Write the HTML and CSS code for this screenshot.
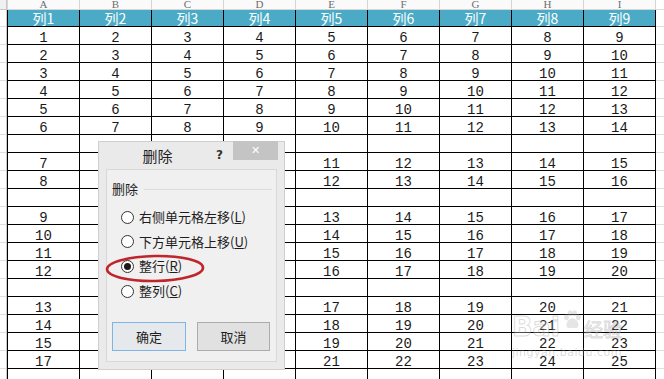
FILE: index.html
```html
<!DOCTYPE html>
<html><head><meta charset="utf-8">
<title>删除</title>
<link rel="stylesheet" href="styles.css">
</head>
<body>
<div class="sheet">
  <div class="row letters"><i class="rh"></i><b>A</b><b>B</b><b>C</b><b>D</b><b>E</b><b>F</b><b>G</b><b>H</b><b>I</b><i class="fill"></i></div>
  <div class="row head"><i class="rh"></i><span>列1</span><span>列2</span><span>列3</span><span>列4</span><span>列5</span><span>列6</span><span>列7</span><span>列8</span><span>列9</span><i class="fill"></i></div>
  <div class="row"><i class="rh"></i><span>1</span><span>2</span><span>3</span><span>4</span><span>5</span><span>6</span><span>7</span><span>8</span><span>9</span><i class="fill"></i></div>
  <div class="row"><i class="rh"></i><span>2</span><span>3</span><span>4</span><span>5</span><span>6</span><span>7</span><span>8</span><span>9</span><span>10</span><i class="fill"></i></div>
  <div class="row"><i class="rh"></i><span>3</span><span>4</span><span>5</span><span>6</span><span>7</span><span>8</span><span>9</span><span>10</span><span>11</span><i class="fill"></i></div>
  <div class="row"><i class="rh"></i><span>4</span><span>5</span><span>6</span><span>7</span><span>8</span><span>9</span><span>10</span><span>11</span><span>12</span><i class="fill"></i></div>
  <div class="row"><i class="rh"></i><span>5</span><span>6</span><span>7</span><span>8</span><span>9</span><span>10</span><span>11</span><span>12</span><span>13</span><i class="fill"></i></div>
  <div class="row"><i class="rh"></i><span>6</span><span>7</span><span>8</span><span>9</span><span>10</span><span>11</span><span>12</span><span>13</span><span>14</span><i class="fill"></i></div>
  <div class="row"><i class="rh"></i><span></span><span></span><span></span><span></span><span></span><span></span><span></span><span></span><span></span><i class="fill"></i></div>
  <div class="row"><i class="rh"></i><span>7</span><span>8</span><span>9</span><span>10</span><span>11</span><span>12</span><span>13</span><span>14</span><span>15</span><i class="fill"></i></div>
  <div class="row"><i class="rh"></i><span>8</span><span>9</span><span>10</span><span>11</span><span>12</span><span>13</span><span>14</span><span>15</span><span>16</span><i class="fill"></i></div>
  <div class="row"><i class="rh"></i><span></span><span></span><span></span><span></span><span></span><span></span><span></span><span></span><span></span><i class="fill"></i></div>
  <div class="row"><i class="rh"></i><span>9</span><span>10</span><span>11</span><span>12</span><span>13</span><span>14</span><span>15</span><span>16</span><span>17</span><i class="fill"></i></div>
  <div class="row"><i class="rh"></i><span>10</span><span>11</span><span>12</span><span>13</span><span>14</span><span>15</span><span>16</span><span>17</span><span>18</span><i class="fill"></i></div>
  <div class="row"><i class="rh"></i><span>11</span><span>12</span><span>13</span><span>14</span><span>15</span><span>16</span><span>17</span><span>18</span><span>19</span><i class="fill"></i></div>
  <div class="row"><i class="rh"></i><span>12</span><span>13</span><span>14</span><span>15</span><span>16</span><span>17</span><span>18</span><span>19</span><span>20</span><i class="fill"></i></div>
  <div class="row"><i class="rh"></i><span></span><span></span><span></span><span></span><span></span><span></span><span></span><span></span><span></span><i class="fill"></i></div>
  <div class="row"><i class="rh"></i><span>13</span><span>14</span><span>15</span><span>16</span><span>17</span><span>18</span><span>19</span><span>20</span><span>21</span><i class="fill"></i></div>
  <div class="row"><i class="rh"></i><span>14</span><span>15</span><span>16</span><span>17</span><span>18</span><span>19</span><span>20</span><span>21</span><span>22</span><i class="fill"></i></div>
  <div class="row"><i class="rh"></i><span>15</span><span>16</span><span>17</span><span>18</span><span>19</span><span>20</span><span>21</span><span>22</span><span>23</span><i class="fill"></i></div>
  <div class="row"><i class="rh"></i><span>17</span><span>18</span><span>19</span><span>20</span><span>21</span><span>22</span><span>23</span><span>24</span><span>25</span><i class="fill"></i></div>
  <div class="row"><i class="rh"></i><span></span><span></span><span></span><span></span><span></span><span></span><span></span><span></span><span></span><i class="fill"></i></div>
</div>

<div class="watermark">
  <div class="wm-line">
    <span class="wm-logo">Bai</span>
    <svg class="wm-paw" width="20" height="20" viewBox="0 0 22 22">
      <ellipse cx="5" cy="8" rx="2.6" ry="3.4" />
      <ellipse cx="9" cy="3.5" rx="2.6" ry="3.2" />
      <ellipse cx="14" cy="3.5" rx="2.6" ry="3.2" />
      <ellipse cx="18" cy="8" rx="2.6" ry="3.4" />
      <path d="M11.5 9 C7 9 4 15 5 18 C6 21 9 19.5 11.5 19.5 C14 19.5 17 21 18 18 C19 15 16 9 11.5 9 Z" />
    </svg>
    <span class="wm-cn">经验</span>
  </div>
  <div class="wm-url">jingyan.baidu.com</div>
</div>

<div class="dlg">
  <div class="dlg-title">
    <span class="caption">删除</span>
    <span class="help">?</span>
    <span class="close">✕</span>
  </div>
  <div class="dlg-body">
    <div class="group"><span>删除</span><i></i></div>
    <div class="opt"><i class="radio"></i>右侧单元格左移(<u>L</u>)</div>
    <div class="opt"><i class="radio"></i>下方单元格上移(<u>U</u>)</div>
    <div class="opt"><i class="radio on"></i>整行(<u>R</u>)</div>
    <div class="opt"><i class="radio"></i>整列(<u>C</u>)</div>
    <div class="btns">
      <button class="ok">确定</button>
      <button>取消</button>
    </div>
  </div>
</div>

<svg class="mark" width="104" height="32" viewBox="0 0 104 32">
  <ellipse cx="51" cy="15.5" rx="48" ry="12.5" fill="none" stroke="#c0252c" stroke-width="2.6" transform="rotate(-1 51 15.5)" />
</svg>

</body></html>
```

FILE: styles.css
```css
body {
	margin: 0;
	background: #fff;
	position: relative;
	width: 664px;
	height: 379px;
	overflow: hidden;
}
.sheet {
	width: 664px;
}
.row {
	display: grid;
	grid-template-columns: 7px 73px repeat(8, 72px) 1fr;
	height: 18px;
}
.row > span {
	box-sizing: border-box;
	border-right: 1px solid #000;
	border-bottom: 1px solid #000;
	font-family: "Liberation Mono", monospace;
	font-size: 14px;
	line-height: 17px;
	padding-top: 3px;
	text-align: center;
	color: #1a1a1a;
	overflow: hidden;
}
.row > span:nth-child(2) {
	border-left: 1px solid #000;
}
.rh {
	box-sizing: border-box;
	border-bottom: 1px solid #dedede;
	border-right: 1px solid #c8c8c8;
}
.fill {
	box-sizing: border-box;
	border-bottom: 1px solid #dedede;
}
.letters {
	height: 10px;
}
.letters b {
	box-sizing: border-box;
	font-weight: normal;
	font-family: "Liberation Serif", serif;
	font-size: 11px;
	line-height: 9px;
	text-align: center;
	color: #6e6e6e;
	border-right: 1px solid #d6d6d6;
	border-bottom: 1px solid #d6d6d6;
	background: #fafafa;
}
.letters b:first-of-type {
	border-left: 1px solid #d6d6d6;
}
.letters .rh {
	background: #f0f0f0;
	border-bottom-color: #c8c8c8;
}
.head {
	height: 17px;
}
.head > span {
	background: #4babc6;
	color: #fff;
	font-family: "Noto Sans CJK SC", sans-serif;
	font-size: 14px;
	line-height: 16px;
	padding-top: 0;
}

/* dialog */
.dlg {
	position: absolute;
	left: 98px;
	top: 141px;
	width: 187px;
	height: 229px;
	box-sizing: border-box;
	background: #eaeaea;
	border: 1px solid #cfcfcf;
	font-family: "Noto Sans CJK SC", sans-serif;
	color: #1e1e1e;
}
.dlg-title {
	display: flex;
	align-items: flex-start;
	height: 27px;
}
.caption {
	width: 117px;
	text-align: center;
	font-size: 15px;
	line-height: 15px;
	padding-top: 6px;
}
.help {
	width: 17px;
	font-family: "DejaVu Sans", sans-serif;
	font-weight: bold;
	font-size: 12px;
	line-height: 12px;
	padding-top: 7px;
	color: #333;
}
.close {
	width: 45px;
	height: 19px;
	margin-top: -1px;
	background: #c4c4c4;
	color: #fff;
	font-family: "DejaVu Sans", sans-serif;
	font-size: 11px;
	line-height: 19px;
	text-align: center;
}
.dlg-body {
	box-sizing: border-box;
	margin: 0 7px;
	height: 193px;
	border: 1px solid #d8d8d8;
	background: #f0f0f0;
	padding: 11px 0 0 5px;
	font-size: 13px;
}
.group {
	display: flex;
	align-items: center;
	height: 16px;
	line-height: 16px;
}
.group i {
	flex: 1;
	height: 1px;
	background: #dcdcdc;
	margin: 0 4px 0 6px;
}
.opt {
	display: flex;
	align-items: center;
	height: 24.6px;
	line-height: 16px;
	padding-left: 9px;
}
.group + .opt {
	margin-top: 8px;
}
.opt u {
	text-decoration: underline;
	text-underline-offset: 1px;
}
.radio {
	box-sizing: border-box;
	width: 13px;
	height: 13px;
	border: 1px solid #333;
	border-radius: 50%;
	background: #fff;
	margin-right: 5px;
	display: flex;
	align-items: center;
	justify-content: center;
}
.radio.on::after {
	content: "";
	width: 7px;
	height: 7px;
	border-radius: 50%;
	background: #1a1a1a;
}
.btns {
	display: flex;
	gap: 11px;
	margin-top: 19px;
}
.btns button {
	box-sizing: border-box;
	width: 73px;
	height: 29px;
	border: 1px solid #acacac;
	background: #e1e1e1;
	font-family: "Noto Sans CJK SC", sans-serif;
	font-size: 13px;
	color: #1e1e1e;
	padding: 0;
}
.btns .ok {
	width: 74px;
	border-color: #7eb4ea;
	background: #e6e9ec;
}

.mark {
	position: absolute;
	left: 104px;
	top: 253px;
}

/* baidu watermark */
.watermark {
	position: absolute;
	left: 512px;
	top: 310px;
	width: 150px;
	font-family: "DejaVu Sans", sans-serif;
}
.wm-line {
	display: flex;
	align-items: flex-end;
	gap: 2px;
	height: 32px;
	white-space: nowrap;
}
.wm-logo {
	font-size: 27px;
	line-height: 30px;
	font-weight: bold;
	color: rgba(255, 255, 255, 0.3);
	-webkit-text-stroke: 1px rgba(150, 150, 150, 0.35);
}
.wm-paw {
	fill: rgba(180, 180, 180, 0.35);
	align-self: flex-start;
}
.wm-cn {
	font-family: "Noto Sans CJK SC", sans-serif;
	font-size: 19px;
	line-height: 26px;
	color: rgba(255, 255, 255, 0.3);
	-webkit-text-stroke: 1px rgba(150, 150, 150, 0.35);
}
.wm-url {
	margin-top: 4px;
	font-size: 11px;
	line-height: 14px;
	color: rgba(150, 150, 150, 0.35);
	letter-spacing: 0.5px;
}
```
